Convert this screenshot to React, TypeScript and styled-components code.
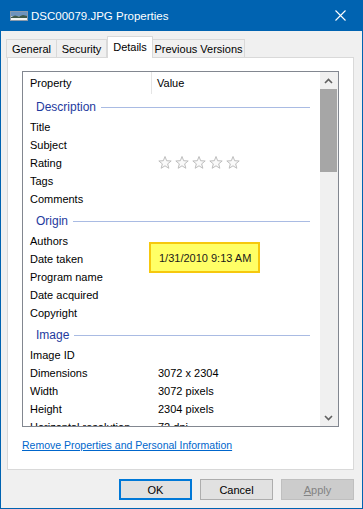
import React from 'react';
import styled, { createGlobalStyle } from 'styled-components';

const GlobalStyle = createGlobalStyle`
  html, body {
    margin: 0;
    padding: 0;
    background: #f0f0f0;
  }
  body {
    font-family: "Liberation Sans", Arial, sans-serif;
    font-size: 11px;
    color: #000;
  }
`;

const Window = styled.div`
  width: 363px;
  height: 509px;
  box-sizing: border-box;
  border: 1px solid #0063b1;
  border-top: none;
  background: #f0f0f0;
  display: flex;
  flex-direction: column;
`;

const TitleBar = styled.div`
  height: 31px;
  background: #0063b1;
  display: flex;
  align-items: center;
  padding-left: 9px;
  color: #fff;
  font-size: 11.5px;
`;

const TitleText = styled.span`
  margin-left: 3px;
  padding-top: 1px;
`;

const CloseBox = styled.div`
  margin-left: auto;
  width: 44px;
  height: 31px;
  display: flex;
  align-items: center;
  justify-content: center;
`;

const Body = styled.div`
  padding: 6px 8px 0 6px;
  display: flex;
  flex-direction: column;
`;

const TabRow = styled.div`
  display: flex;
  align-items: flex-end;
  height: 21px;
  position: relative;
  z-index: 1;
`;

interface ITabProps {
  width: number;
  active?: boolean;
}

const Tab = styled.div<ITabProps>`
  width: ${props => props.width}px;
  height: ${props => (props.active ? 22 : 19)}px;
  box-sizing: border-box;
  border: 1px solid #d9d9d9;
  border-bottom: ${props => (props.active ? 'none' : '1px solid #d9d9d9')};
  background: ${props => (props.active ? '#fff' : '#f0f0f0')};
  margin-left: ${props => (props.active ? '0' : '-1px')};
  display: flex;
  align-items: center;
  justify-content: center;
  white-space: nowrap;
  padding-bottom: ${props => (props.active ? '2px' : '0')};
`;

const Panel = styled.div`
  width: 347px;
  height: 413px;
  box-sizing: border-box;
  margin-top: -1px;
  background: #fff;
  border: 1px solid #d9d9d9;
  padding: 13px 0 0 14px;
`;

const ListBox = styled.div`
  width: 317px;
  height: 356px;
  box-sizing: border-box;
  border: 1px solid #828790;
  display: flex;
  background: #fff;
`;

const ListContent = styled.div`
  flex: 1;
  overflow: hidden;
  display: flex;
  flex-direction: column;
`;

const HeaderRow = styled.div`
  height: 22px;
  flex-shrink: 0;
  display: flex;
  align-items: center;
`;

const HeaderCell = styled.div<{ width?: number }>`
  height: 100%;
  display: flex;
  align-items: center;
  box-sizing: border-box;
  width: ${props => (props.width ? `${props.width}px` : 'auto')};
  padding-left: ${props => (props.width ? '7px' : '5px')};
  border-right: ${props => (props.width ? '1px solid #e5e5e5' : 'none')};
`;

const GroupRow = styled.div`
  height: 24px;
  flex-shrink: 0;
  display: flex;
  align-items: center;
  padding: 2px 10px 0 13px;
  box-sizing: border-box;
  color: #1e3a9e;
  font-size: 12px;
`;

const GroupLine = styled.div`
  flex: 1;
  height: 1px;
  margin-left: 5px;
  background: #a9bbe3;
`;

const Row = styled.div`
  height: 18px;
  flex-shrink: 0;
  display: flex;
  align-items: center;
`;

const Label = styled.div`
  width: 135px;
  padding-left: 7px;
  box-sizing: border-box;
  white-space: nowrap;
`;

const Value = styled.div`
  display: flex;
  align-items: center;
  white-space: nowrap;
`;

const Stars = styled.div`
  display: flex;
  gap: 3px;
`;

const Highlight = styled.span`
  display: inline-flex;
  align-items: center;
  height: 31px;
  box-sizing: border-box;
  padding: 0 7px 0 8px;
  margin: 0 0 3px -9px;
  background: #ffff66;
  border: 2px solid #f6c80e;
  color: #1a1a1a;
`;

const ScrollBar = styled.div`
  width: 17px;
  padding-right: 1px;
  background: #f0f0f0;
  display: flex;
  flex-direction: column;
`;

const ArrowButton = styled.div`
  height: 17px;
  display: flex;
  align-items: center;
  justify-content: center;
`;

const Track = styled.div`
  flex: 1;
  display: flex;
  flex-direction: column;
`;

const Thumb = styled.div`
  height: 83px;
  background: #a6a6a6;
`;

const LinkText = styled.a`
  display: inline-block;
  margin-top: 12px;
  color: #0066cc;
  font-size: 10.5px;
  text-decoration: underline;
  cursor: pointer;
`;

const ButtonRow = styled.div`
  display: flex;
  justify-content: flex-end;
  gap: 8px;
  margin-top: 9px;
`;

interface IButtonProps {
  variant?: 'default' | 'normal' | 'disabled';
}

const Button = styled.div<IButtonProps>`
  width: 73px;
  height: 21px;
  box-sizing: border-box;
  display: flex;
  align-items: center;
  justify-content: center;
  background: ${props => (props.variant === 'disabled' ? '#cccccc' : '#e1e1e1')};
  border: ${props =>
    props.variant === 'default'
      ? '2px solid #0078d7'
      : props.variant === 'disabled'
      ? '1px solid #bfbfbf'
      : '1px solid #adadad'};
  color: ${props => (props.variant === 'disabled' ? '#838383' : '#000')};
  u {
    text-decoration: underline;
  }
`;

const FileIcon = () => (
  <svg width="18" height="10" viewBox="0 0 18 10">
    <rect x="0.5" y="0.5" width="17" height="9" fill="#dfe6ee" stroke="#8a9aab" />
    <rect x="1" y="1" width="16" height="4" fill="#6d93bd" />
    <path d="M1 6 L5 4.5 L9 5.5 L13 4 L17 5 L17 7 L1 7 Z" fill="#3f5a4a" />
    <rect x="1" y="7" width="16" height="2" fill="#f2f4f2" />
  </svg>
);

const CloseIcon = () => (
  <svg width="11" height="11" viewBox="0 0 11 11">
    <path d="M0.5 0.5 L10.5 10.5 M10.5 0.5 L0.5 10.5" stroke="#fff" strokeWidth="1.1" />
  </svg>
);

const StarIcon = () => (
  <svg width="14" height="14" viewBox="0 0 14 14">
    <polygon
      points="7,0.5 8.65,4.73 13.18,4.99 9.66,7.87 10.82,12.26 7,9.8 3.18,12.26 4.34,7.87 0.82,4.99 5.35,4.73"
      fill="#fafafa"
      stroke="#bdbdbd"
      strokeWidth="1"
    />
  </svg>
);

const Chevron = ({ up }: { up?: boolean }) => (
  <svg width="9" height="6" viewBox="0 0 9 6">
    <path
      d={up ? 'M1 5 L4.5 1.5 L8 5' : 'M1 1 L4.5 4.5 L8 1'}
      fill="none"
      stroke="#606060"
      strokeWidth="1.6"
    />
  </svg>
);

type Item = { label: string; value?: React.ReactNode };
type Section = { title: string; items: Item[] };

const sections: Section[] = [
  {
    title: 'Description',
    items: [
      { label: 'Title' },
      { label: 'Subject' },
      {
        label: 'Rating',
        value: (
          <Stars>
            {[0, 1, 2, 3, 4].map(i => (
              <StarIcon key={i} />
            ))}
          </Stars>
        ),
      },
      { label: 'Tags' },
      { label: 'Comments' },
    ],
  },
  {
    title: 'Origin',
    items: [
      { label: 'Authors' },
      { label: 'Date taken', value: <Highlight>1/31/2010 9:13 AM</Highlight> },
      { label: 'Program name' },
      { label: 'Date acquired' },
      { label: 'Copyright' },
    ],
  },
  {
    title: 'Image',
    items: [
      { label: 'Image ID' },
      { label: 'Dimensions', value: '3072 x 2304' },
      { label: 'Width', value: '3072 pixels' },
      { label: 'Height', value: '2304 pixels' },
      { label: 'Horizontal resolution', value: '72 dpi' },
    ],
  },
];

const tabs = [
  { name: 'General', width: 51 },
  { name: 'Security', width: 51 },
  { name: 'Details', width: 46, active: true },
  { name: 'Previous Versions', width: 93 },
];

const App = (): JSX.Element => {
  return (
    <>
      <GlobalStyle />
      <Window>
        <TitleBar>
          <FileIcon />
          <TitleText>DSC00079.JPG Properties</TitleText>
          <CloseBox>
            <CloseIcon />
          </CloseBox>
        </TitleBar>
        <Body>
          <TabRow>
            {tabs.map(t => (
              <Tab key={t.name} width={t.width} active={t.active}>
                {t.name}
              </Tab>
            ))}
          </TabRow>
          <Panel>
            <ListBox>
              <ListContent>
                <HeaderRow>
                  <HeaderCell width={129}>Property</HeaderCell>
                  <HeaderCell>Value</HeaderCell>
                </HeaderRow>
                {sections.map(s => (
                  <React.Fragment key={s.title}>
                    <GroupRow>
                      {s.title}
                      <GroupLine />
                    </GroupRow>
                    {s.items.map(item => (
                      <Row key={item.label}>
                        <Label>{item.label}</Label>
                        <Value>{item.value}</Value>
                      </Row>
                    ))}
                  </React.Fragment>
                ))}
              </ListContent>
              <ScrollBar>
                <ArrowButton>
                  <Chevron up />
                </ArrowButton>
                <Track>
                  <Thumb />
                </Track>
                <ArrowButton>
                  <Chevron />
                </ArrowButton>
              </ScrollBar>
            </ListBox>
            <LinkText>Remove Properties and Personal Information</LinkText>
          </Panel>
          <ButtonRow>
            <Button variant="default">OK</Button>
            <Button variant="normal">Cancel</Button>
            <Button variant="disabled">
              <u>A</u>pply
            </Button>
          </ButtonRow>
        </Body>
      </Window>
    </>
  );
};

export default App;
